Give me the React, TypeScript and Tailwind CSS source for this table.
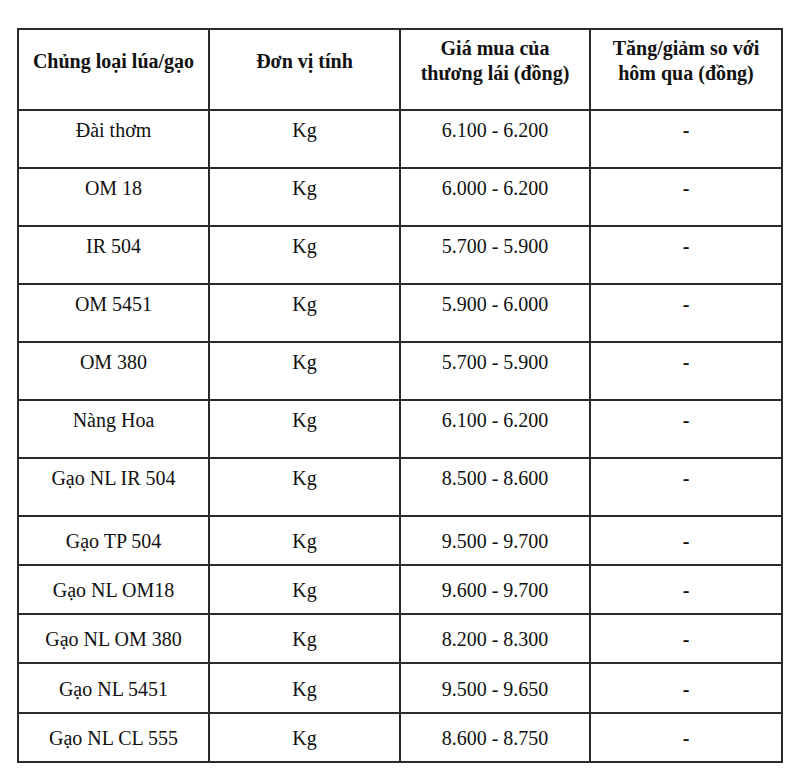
import React from "react";

const rows: { name: string; price: string; tall: boolean; h: number }[] = [
  { name: "Đài thơm", price: "6.100 - 6.200", tall: true, h: 58 },
  { name: "OM 18", price: "6.000 - 6.200", tall: true, h: 58 },
  { name: "IR 504", price: "5.700 - 5.900", tall: true, h: 58 },
  { name: "OM 5451", price: "5.900 - 6.000", tall: true, h: 58 },
  { name: "OM 380", price: "5.700 - 5.900", tall: true, h: 58 },
  { name: "Nàng Hoa", price: "6.100 - 6.200", tall: true, h: 58 },
  { name: "Gạo NL IR 504", price: "8.500 - 8.600", tall: true, h: 58 },
  { name: "Gạo TP 504", price: "9.500 - 9.700", tall: false, h: 49 },
  { name: "Gạo NL OM18", price: "9.600 - 9.700", tall: false, h: 49 },
  { name: "Gạo NL OM 380", price: "8.200 - 8.300", tall: false, h: 49 },
  { name: "Gạo NL 5451", price: "9.500 - 9.650", tall: false, h: 50 },
  { name: "Gạo NL CL 555", price: "8.600 - 8.750", tall: false, h: 49 },
];

export default function App() {
  return (
    <div
      className="w-[800px] h-[783px] bg-white pl-[17px] pt-[28px] text-[#111]"
      style={{ fontFamily: '"Liberation Serif", "Times New Roman", serif' }}
    >
      <table className="table-fixed border-collapse w-[764px] text-[20px] leading-[25px]">
        <colgroup>
          <col className="w-[191px]" />
          <col className="w-[191px]" />
          <col className="w-[190px]" />
          <col className="w-[192px]" />
        </colgroup>
        <thead>
          <tr className="h-[81px]">
            <th className="border-2 border-[#2b2b2b] text-center align-middle font-bold pt-[5px] pb-[22px] px-1">
              Chủng loại lúa/gạo
            </th>
            <th className="border-2 border-[#2b2b2b] text-center align-middle font-bold pt-[5px] pb-[22px] px-1">
              Đơn vị tính
            </th>
            <th className="border-2 border-[#2b2b2b] text-center align-middle font-bold pt-[5px] pb-[22px] px-1">
              Giá mua của
              <br />
              thương lái (đồng)
            </th>
            <th className="border-2 border-[#2b2b2b] text-center align-middle font-bold pt-[5px] pb-[22px] px-1">
              Tăng/giảm so với
              <br />
              hôm qua (đồng)
            </th>
          </tr>
        </thead>
        <tbody>
          {rows.map((r) => {
            const cell = r.tall
              ? "border-2 border-[#2b2b2b] text-center align-top pt-[7px] px-1"
              : "border-2 border-[#2b2b2b] text-center align-middle pt-[2px] px-1";
            return (
              <tr key={r.name} style={{ height: r.h }}>
                <td className={cell}>{r.name}</td>
                <td className={cell}>Kg</td>
                <td className={cell}>{r.price}</td>
                <td className={cell + " font-bold"}>-</td>
              </tr>
            );
          })}
        </tbody>
      </table>
    </div>
  );
}
